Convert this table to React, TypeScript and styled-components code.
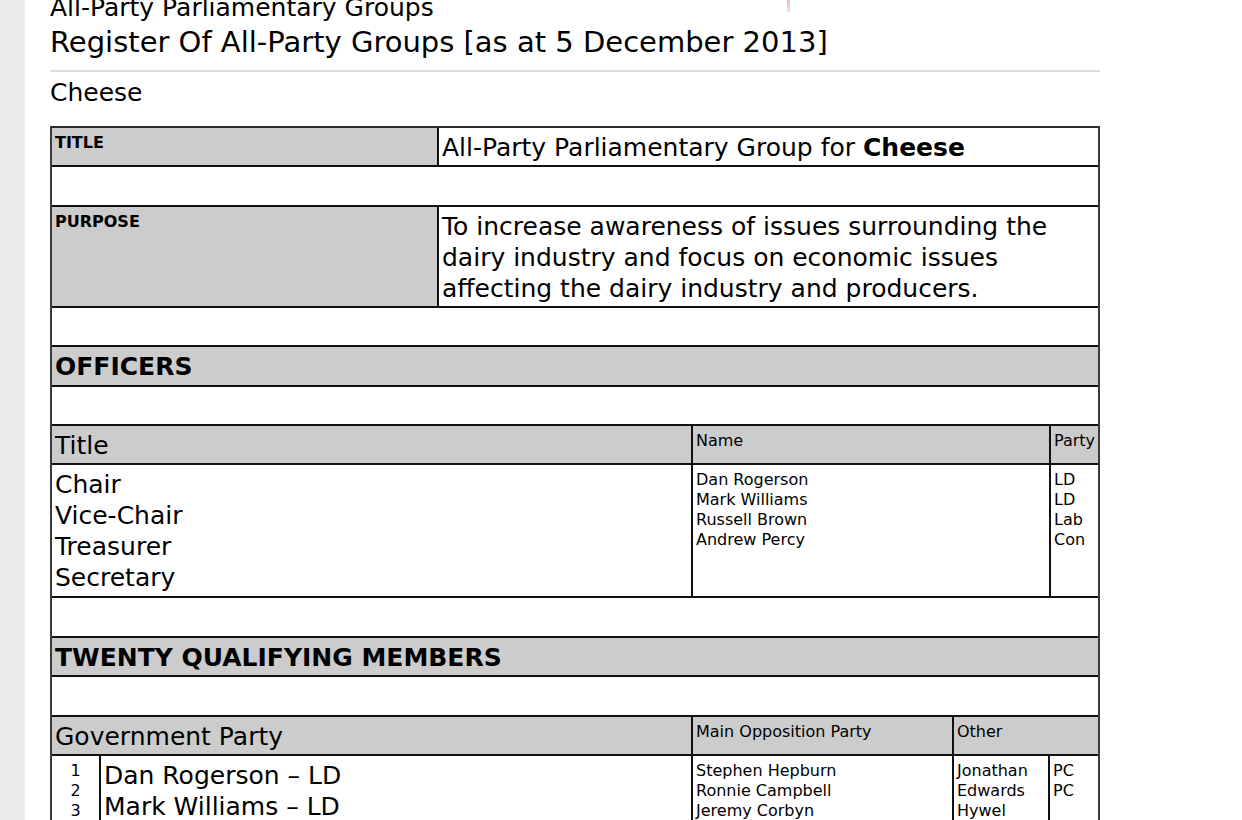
import styled, { createGlobalStyle } from "styled-components";

const GlobalStyle = createGlobalStyle`
  html, body {
    margin: 0;
    padding: 0;
    background: #ffffff;
  }
  body {
    font-family: "DejaVu Sans", Verdana, sans-serif;
    color: #000;
    overflow: hidden;
  }
`;

const Page = styled.div`
  display: flex;
  min-height: 100vh;
`;

const Gutter = styled.div`
  width: 25px;
  flex: none;
  background: #ebebeb;
`;

const Main = styled.div`
  position: relative;
  padding-left: 25px;
  width: 1050px;
`;

const Kicker = styled.h2`
  margin: -7px 0 0;
  font-size: 25px;
  font-weight: normal;
  line-height: 30px;
`;

const Heading = styled.h1`
  margin: 2px 0 0;
  font-size: 29px;
  font-weight: normal;
  line-height: 34px;
  padding-bottom: 11px;
  border-bottom: 2px solid #dcdcdc;
`;

const GroupName = styled.h3`
  margin: 0 0 17px;
  padding-top: 5px;
  font-size: 25px;
  font-weight: normal;
  line-height: 32px;
`;

const Mark = styled.span`
  position: absolute;
  left: 762px;
  top: 0;
  width: 3px;
  height: 12px;
  background: linear-gradient(#f4b7b7, #fbe0e0);
`;

const Table = styled.div`
  border-top: 2px solid #2a2a2a;
  border-left: 2px solid #3a3a3a;
  border-right: 2px solid #3a3a3a;
`;

const Row = styled.div<{ $h?: number }>`
  display: flex;
  min-height: ${(p) => p.$h ?? 37.4}px;
  border-bottom: 2px solid #111;
`;

const Cell = styled.div<{ $w?: number; $grey?: boolean; $size?: number; $bold?: boolean; $center?: boolean }>`
  box-sizing: border-box;
  ${(p) => (p.$w ? `width: ${p.$w}px; flex: none;` : "flex: 1;")}
  background: ${(p) => (p.$grey ? "#cccccc" : "#ffffff")};
  font-size: ${(p) => p.$size ?? 25}px;
  line-height: ${(p) => ((p.$size ?? 25) === 25 ? 31 : 20)}px;
  font-weight: ${(p) => (p.$bold ? "bold" : "normal")};
  text-align: ${(p) => (p.$center ? "center" : "left")};
  padding: ${(p) => ((p.$size ?? 25) === 25 ? 4 : 5)}px 3px 1px;
  & + & {
    border-left: 2px solid #111;
  }
`;

const Lines = styled.div`
  white-space: pre-line;
`;

export default function App() {
  return (
    <>
      <GlobalStyle />
      <Page>
        <Gutter />
        <Main>
          <Mark />
          <Kicker>All-Party Parliamentary Groups</Kicker>
          <Heading>Register Of All-Party Groups [as at 5 December 2013]</Heading>
          <GroupName>Cheese</GroupName>
          <Table>
            <Row>
              <Cell $w={385} $grey $size={16} $bold>
                TITLE
              </Cell>
              <Cell>
                All-Party Parliamentary Group for <b>Cheese</b>
              </Cell>
            </Row>
            <Row />
            <Row $h={99}>
              <Cell $w={385} $grey $size={16} $bold>
                PURPOSE
              </Cell>
              <Cell>
                To increase awareness of issues surrounding the dairy industry and focus on economic
                issues affecting the dairy industry and producers.
              </Cell>
            </Row>
            <Row />
            <Row>
              <Cell $grey $bold>
                OFFICERS
              </Cell>
            </Row>
            <Row />
            <Row>
              <Cell $w={639} $grey>
                Title
              </Cell>
              <Cell $w={358} $grey $size={16}>
                Name
              </Cell>
              <Cell $grey $size={16}>
                Party
              </Cell>
            </Row>
            <Row $h={131}>
              <Cell $w={639}>
                <Lines>{"Chair\nVice-Chair\nTreasurer\nSecretary"}</Lines>
              </Cell>
              <Cell $w={358} $size={16}>
                <Lines>{"Dan Rogerson\nMark Williams\nRussell Brown\nAndrew Percy"}</Lines>
              </Cell>
              <Cell $size={16}>
                <Lines>{"LD\nLD\nLab\nCon"}</Lines>
              </Cell>
            </Row>
            <Row />
            <Row>
              <Cell $grey $bold>
                TWENTY QUALIFYING MEMBERS
              </Cell>
            </Row>
            <Row />
            <Row>
              <Cell $w={639} $grey>
                Government Party
              </Cell>
              <Cell $w={261} $grey $size={16}>
                Main Opposition Party
              </Cell>
              <Cell $grey $size={16}>
                Other
              </Cell>
            </Row>
            <Row $h={200}>
              <Cell $w={47} $size={16} $center>
                <Lines>{"1\n2\n3\n4\n5\n6\n7\n8\n9\n10"}</Lines>
              </Cell>
              <Cell $w={592}>
                <Lines>{"Dan Rogerson – LD\nMark Williams – LD\nRussell Brown – Lab"}</Lines>
              </Cell>
              <Cell $w={261} $size={16}>
                <Lines>{"Stephen Hepburn\nRonnie Campbell\nJeremy Corbyn\nRussell Brown"}</Lines>
              </Cell>
              <Cell $w={96} $size={16}>
                <Lines>{"Jonathan\nEdwards\nHywel\nWilliams"}</Lines>
              </Cell>
              <Cell $size={16}>
                <Lines>{"PC\nPC"}</Lines>
              </Cell>
            </Row>
          </Table>
        </Main>
      </Page>
    </>
  );
}
